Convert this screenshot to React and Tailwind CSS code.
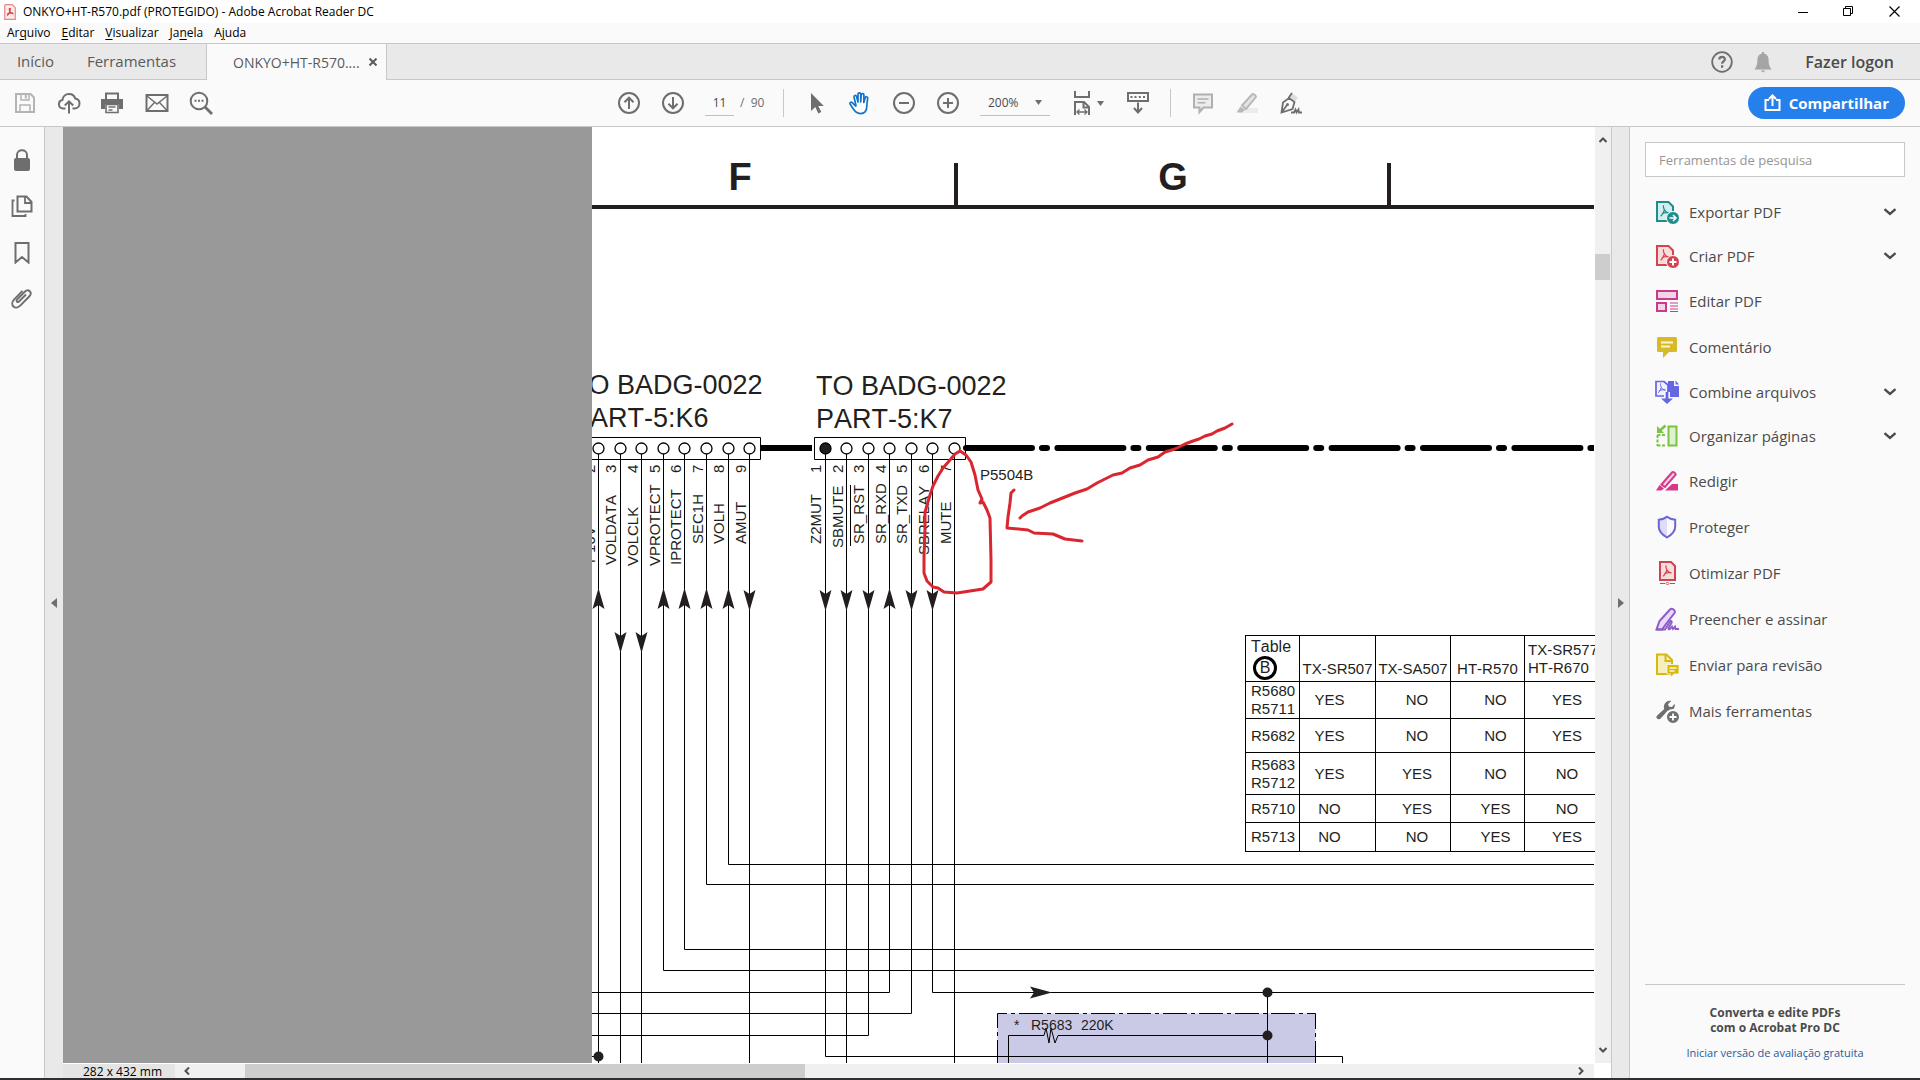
import React from "react";

const LINE = "#6e6e6e";

/* ---------- shared icon pieces ---------- */

function Glyph({ size = 24, children, label }) {
  return (
    <svg
      width={size}
      height={size}
      viewBox="0 0 24 24"
      fill="none"
      stroke="currentColor"
      strokeWidth="2"
      className="shrink-0"
      aria-hidden={label ? undefined : true}
      aria-label={label}
    >
      {children}
    </svg>
  );
}

const ACRO = "M8.5 4.5c-1 0-.6 2.600.4 4.400-.8 2.300-2.300 5.300-3.800 6.300M8.900 8.900c1 1.900 2.300 2.900 4.600 3.100M6.300 13c2.200-1.300 4.600-1.700 7.400-1";

function AppIcon() {
  return (
    <svg width="12" height="16" viewBox="0 0 12 16" fill="none" aria-hidden="true">
      <path d="M1.500.7h6.800l3 3v11.600H.7V1.500z" fill="#fde9e9" stroke="#e58a8a" strokeWidth="1.200" />
      <path d="M5.400 4c-.6 1.200.3 3 1 4 .8 1.200 2 1.800 3.200 1.900M6.300 4c.4 2-1.500 6.600-3.300 7.500M3.200 10c2-1 3.500-1.300 5.600-1.100" stroke="#d9403f" strokeWidth="1.100" />
    </svg>
  );
}

function Chevron() {
  return (
    <svg width="14" height="8" viewBox="0 0 14 8" fill="none" stroke="#4b4b4b" strokeWidth="2.400" aria-hidden="true">
      <path d="M1.500 1.200 7 6l5.500-4.800" />
    </svg>
  );
}

function Caret() {
  return (
    <svg width="7" height="5" viewBox="0 0 7 5" fill={LINE} className="shrink-0" aria-hidden="true">
      <path d="M0 0h7L3.500 5z" />
    </svg>
  );
}

/* ---------- toolbar icons ---------- */

const SaveIcon = () => (
  <Glyph>
    <g stroke="#b4b4b4">
      <path d="M3 3h14.500L21 6.500V21H3z" />
      <path d="M8 3v6h8V3M7 21v-7h10v7" strokeWidth="1.500" />
      <path d="M12.800 4v3.500" />
    </g>
  </Glyph>
);
const CloudIcon = () => (
  <Glyph>
    <path d="M8.500 17.500H6a4.300 4.300 0 0 1-.6-8.500C5.800 5.500 8.500 3 12 3c3 0 5.400 1.800 6.300 4.600 2.600.5 4.200 2.500 4.200 4.900 0 2.800-2.200 5-5 5h-2" />
    <path d="M12 22.500V11M7.800 14.500l4.200-4.200 4.200 4.200" />
  </Glyph>
);
const PrintIcon = () => (
  <Glyph>
    <path d="M6 8V2.500h12V8" />
    <path d="M1 8h22v10h-4v-5H5v5H1z" fill={LINE} stroke="none" />
    <path d="M6 13.500h12v8H6zM8.500 16h7M8.500 19h4" strokeWidth="1.600" />
  </Glyph>
);
const MailIcon = () => (
  <Glyph>
    <path d="M1.500 4h21v16h-21z" />
    <path d="M2 5l10 8 10-8M2 19.500l7.500-8M22 19.500l-7.500-8" strokeWidth="1.500" />
  </Glyph>
);
const FindIcon = () => (
  <Glyph>
    <circle cx="10" cy="10" r="8.300" />
    <path d="M16 16l7 7" strokeWidth="2.800" />
    <path d="M5.500 9.800h2M9 9.800h2M12.500 9.800h2" />
  </Glyph>
);
const UpIcon = () => (
  <Glyph>
    <circle cx="12" cy="12" r="10" />
    <path d="M12 18V7M7.500 11.200 12 6.700l4.500 4.500" />
  </Glyph>
);
const DownIcon = () => (
  <Glyph>
    <circle cx="12" cy="12" r="10" />
    <path d="M12 6v11M7.500 12.800l4.500 4.500 4.500-4.500" />
  </Glyph>
);
const PointerIcon = () => (
  <Glyph>
    <path d="M6 2v18l4.300-4 3 6.500 3-1.400-3-6.200h5.500z" fill={LINE} stroke="none" />
  </Glyph>
);
const HandIcon = () => (
  <Glyph>
    <path
      d="M7.800 13.500 6 6.200c-.4-1.900 2-2.500 2.500-.7L10 11V3.200c0-1.800 2.700-1.800 2.700 0V11l.6-7.200c.2-1.700 2.600-1.600 2.600.1L15.800 11.500l1.400-4.800c.5-1.700 2.800-1.100 2.500.6 0 0-.9 5.200-.9 8.200s-.6 4.200-2 5.700c-1.800 1.800-6.500 1.800-8.500 0C5.800 19.500 4.200 16 2.200 13.300c-1-1.600 1-2.800 2.300-1.400L7.800 15.200z"
      fill="#fff"
      stroke="#1473c8"
      strokeWidth="1.700"
      strokeLinejoin="round"
    />
  </Glyph>
);
const MinusIcon = () => (
  <Glyph>
    <circle cx="12" cy="12" r="10" />
    <path d="M7 12h10" />
  </Glyph>
);
const PlusIcon = () => (
  <Glyph>
    <circle cx="12" cy="12" r="10" />
    <path d="M7 12h10M12 7v10" />
  </Glyph>
);
const FitIcon = () => (
  <svg width="18" height="24" viewBox="0 0 18 24" fill="none" stroke={LINE} strokeWidth="2" aria-hidden="true">
    <path d="M2 0v6h14V0M2 24V11h9l5 5v8M10.500 11v5.500H16" />
    <path d="M4 21h10M6.500 18.500 4 21l2.500 2.500M11.500 18.500 14 21l-2.500 2.500" strokeWidth="1.300" />
  </svg>
);
const ReadIcon = () => (
  <Glyph>
    <path d="M2 2h20v8H2z" />
    <path d="M4.500 6h2M8.500 6h2M12.800 6h2M17 6h2M12 11.500V21M8 17l4 4.500L16 17" />
  </Glyph>
);
const NoteIcon = () => (
  <Glyph>
    <path d="M3 3.500h18v13h-8.500L8.500 21v-4.500H3z" stroke="#b0b0b0" fill="#ececec" />
    <path d="M6.500 8h11M6.500 11.800h8" stroke="#b0b0b0" strokeWidth="1.500" />
  </Glyph>
);
const MarkerIcon = () => (
  <Glyph>
    <path d="M8 17h15v5H4z" fill="#ececec" stroke="none" />
    <path d="M7 14.500 17 3.500c1.200-1.300 4.800 1.500 3.600 3L11 18z" stroke="#b8b8b8" fill="#e4e4e4" />
    <path d="M5.500 15.500l4.500 3.500-3 2.500H1.500z" fill="#b8b8b8" stroke="none" />
  </Glyph>
);
const SignIcon = () => (
  <Glyph>
    <path d="M9.500 7.500 12.500 2l6.500 4.500L15.500 11z" fill="#dedede" stroke="none" />
    <path d="M2.500 21.500 4 11.500l6-4.500 5.500 4-2 7zM3 21l5-7M9.500 7l3.500-5M12 21.500h3l1.500-3 1 3 2-3 .5 3h3" strokeWidth="1.800" />
    <circle cx="8.500" cy="13.500" r="1.500" fill={LINE} stroke="none" />
  </Glyph>
);

/* ---------- tool panel icons ---------- */

const PdfSheet = ({ color, fill }) => (
  <g stroke={color}>
    <path d="M2 2h11.500L18 6.500V21H2z" fill={fill} />
    <path d={ACRO} strokeWidth="1.200" transform="translate(.5 1)" />
  </g>
);

const ExportIcon = () => (
  <Glyph>
    <PdfSheet color="#1f8d90" fill="#d3eeee" />
    <circle cx="18" cy="18" r="6.500" fill="#1f8d90" stroke="#fafafa" strokeWidth="1" />
    <path d="M14.500 18h5M18 15l3 3-3 3" stroke="#fff" strokeWidth="1.600" />
  </Glyph>
);
const CreateIcon = () => (
  <Glyph>
    <PdfSheet color="#d2444f" fill="#fbdcdc" />
    <circle cx="18" cy="18" r="6.500" fill="#d2444f" stroke="#fafafa" strokeWidth="1" />
    <path d="M14.500 18h7M18 14.500v7" stroke="#fff" />
  </Glyph>
);
const EditIcon = () => (
  <Glyph>
    <g stroke="#c93a8c" fill="#f3d3e8">
      <path d="M2 2h20v8H2zM2 14h9v8H2z" />
      <path d="M15 14h8M15 17h8M15 20h8M15 22.500h8" strokeWidth="1.100" />
    </g>
  </Glyph>
);
const CommentIcon = () => (
  <Glyph>
    <path d="M3.500 2h17A1.500 1.500 0 0 1 22 3.500v12a1.500 1.500 0 0 1-1.500 1.500H14l-6 6v-6H3.500A1.500 1.500 0 0 1 2 15.500v-12A1.500 1.500 0 0 1 3.500 2z" fill="#d8b92c" stroke="none" />
    <path d="M6 7.500h12M6 11.500h9" stroke="#fff6cf" strokeWidth="1.800" />
  </Glyph>
);
const CombineIcon = () => (
  <Glyph>
    <path d="M13 1h6v5h5v11H13z" fill="#6466e2" stroke="none" />
    <path d="M20.500.5 24 4.500h-3.500z" fill="#6466e2" stroke="none" />
    <path d="M1 1.500h8l4 3.500v11H1z" fill="#f1f1ff" stroke="#6466e2" strokeWidth="1.700" />
    <path d={ACRO} transform="translate(-1.500 -.5) scale(.88)" stroke="#6466e2" strokeWidth="1.100" />
    <path d="M12 12v10" stroke="#fafafa" strokeWidth="6" />
    <path d="M12 12v8" stroke="#6466e2" strokeWidth="2.800" />
    <path d="M6 18.500h12L12 24z" fill="#6466e2" stroke="none" />
  </Glyph>
);
const OrganizeIcon = () => (
  <Glyph>
    <g stroke="#7cc243">
      <path d="M13.500 2.500h8v19h-8z" fill="#dff2cf" />
      <path d="M2.500 11h8.500M2.500 21.500h8.500M2.500 11v11" strokeDasharray="3 1.500" />
      <path d="M10.500 1.500 5 6.500" strokeWidth="2.500" />
      <path d="M2 2v7h7z" fill="#7cc243" stroke="none" />
    </g>
  </Glyph>
);
const RedactIcon = () => (
  <Glyph>
    <path d="M10 21.500 17 15h6v6.500z" fill="#d8388c" stroke="none" />
    <path d="M6.500 15.500 17 3.500c1.200-1.400 4.500 1 3.300 2.700L10 18z" stroke="#d8388c" fill="#f7cfe3" />
    <path d="M4.500 16l4.500 3.500-2.500 2H1z" fill="#d8388c" stroke="none" />
  </Glyph>
);
const ShieldIcon = () => (
  <Glyph>
    <path d="M12 2v20c-5-3-8-6-8-11V5c4 0 6-1.300 8-3z" fill="#dedcf8" stroke="none" />
    <path d="M12 1.800c2 1.700 4.500 2.700 8.200 2.900v7c0 4.500-3.200 7.800-8.200 10.800-5-3-8.200-6.300-8.200-10.800v-7c3.700-.2 6.200-1.200 8.200-2.900z" stroke="#6a66d6" />
  </Glyph>
);
const OptimizeIcon = () => (
  <Glyph>
    <g stroke="#cc4552">
      <path d="M5 1h11l4 4v14H5z" fill="#fbdcdc" />
      <path d={ACRO} transform="translate(3 0)" strokeWidth="1.200" />
      <path d="M5 22.500h5M15 22.500h5" strokeWidth="1.200" />
      <path d="M11 22.500l1.500-1.500 1.500 1.500-1.500 1.500z" strokeWidth="1" />
    </g>
  </Glyph>
);
const FillIcon = () => (
  <Glyph>
    <path
      d="M1.500 22.500 4.500 14 15 2.500c2-2 6 .8 4.500 3.500L11 17l-4 5.500z"
      stroke="#8e5bc9"
      fill="#e9daf8"
    />
    <path
      d="M1.500 22.500H10l5-8c1-1.500 2.500 0 1.500 1.500L13.500 21c-.5 1.500 1 2 2 .5l1.500-2 1 2.500 2-2.500.5 2.500H24"
      stroke="#8e5bc9"
      strokeWidth="1.800"
    />
  </Glyph>
);
const SendIcon = () => (
  <Glyph>
    <path d="M2 1.500h9.500L17 7v14H2z" fill="#f6efba" stroke="#d8b910" />
    <path d="M10.500 1.500V8H17" stroke="#d8b910" />
    <path d="M12 11.500h12v9.500h-5l-3.500 3.500V21H12z" fill="#d8b910" stroke="#fafafa" strokeWidth=".8" />
    <path d="M14.500 15h7M14.500 18h5" stroke="#fff6cf" strokeWidth="1.300" />
  </Glyph>
);
const MoreIcon = () => (
  <Glyph>
    <path d="M2 20.500c-1-1-.7-2.300.2-3.100l7-6.300c-.8-2.800-.2-5.400 2-7.100 1.500-1.200 3.300-1.500 5-1.100L13 6.200l1.200 2.500 2.800.3 2.600-3.200c.6 2-.1 4.300-1.500 5.700-1.500 1.300-3.700 1.800-5.500 1.300l-7 7.700c-.9 1-2.500 1-3.600 0z" fill={LINE} stroke="none" transform="translate(0 -1)" />
    <circle cx="18" cy="18" r="7" fill={LINE} stroke="#fafafa" />
    <path d="M14.500 18h7M18 14.500v7" stroke="#fff" strokeWidth="1.800" />
  </Glyph>
);

const TOOLS = [
  { name: "Exportar PDF", Icon: ExportIcon, open: true },
  { name: "Criar PDF", Icon: CreateIcon, open: true },
  { name: "Editar PDF", Icon: EditIcon },
  { name: "Comentário", Icon: CommentIcon },
  { name: "Combine arquivos", Icon: CombineIcon, open: true },
  { name: "Organizar páginas", Icon: OrganizeIcon, open: true },
  { name: "Redigir", Icon: RedactIcon },
  { name: "Proteger", Icon: ShieldIcon },
  { name: "Otimizar PDF", Icon: OptimizeIcon },
  { name: "Preencher e assinar", Icon: FillIcon },
  { name: "Enviar para revisão", Icon: SendIcon },
  { name: "Mais ferramentas", Icon: MoreIcon },
];

/* ---------- window chrome ---------- */

function TitleBar() {
  return (
    <header className="flex h-[23px] shrink-0 items-center bg-white pl-1 text-[12px] text-black">
      <AppIcon />
      <h1 className="ml-[7px] text-[12px] font-normal">ONKYO+HT-R570.pdf (PROTEGIDO) - Adobe Acrobat Reader DC</h1>
      <div className="ml-auto flex pr-[2px]">
        <button aria-label="Minimizar" className="grid h-[23px] w-[46px] place-items-center">
          <svg width="10" height="10" stroke="#000"><path d="M0 5.500h10" /></svg>
        </button>
        <button aria-label="Restaurar" className="grid h-[23px] w-[45px] place-items-center">
          <svg width="11" height="11" fill="none" stroke="#000"><path d="M.5 2.500h7v7h-7zM2.500 2.500v-2h7v7h-2" /></svg>
        </button>
        <button aria-label="Fechar" className="grid h-[23px] w-[47px] place-items-center">
          <svg width="11" height="11" stroke="#000" strokeWidth="1.200"><path d="M.5.5l10 10M10.500.5l-10 10" /></svg>
        </button>
      </div>
    </header>
  );
}

const MENUS = [
  ["Ar", "q", "uivo"],
  ["", "E", "ditar"],
  ["", "V", "isualizar"],
  ["Ja", "n", "ela"],
  ["A", "j", "uda"],
];

function MenuBar() {
  return (
    <nav className="flex h-5 shrink-0 items-center gap-[11px] bg-[#fafafa] pl-[7px] text-[12px] text-black">
      {MENUS.map(([a, k, b]) => (
        <button key={a + k + b}>
          {a}
          <span className="underline underline-offset-2">{k}</span>
          {b}
        </button>
      ))}
    </nav>
  );
}

function TabBar() {
  return (
    <div className="flex h-[37px] shrink-0 items-stretch border-y border-[#c8c8c8] bg-[#e9e9e9] text-[#5a5a5a]">
      <button className="w-[71px] text-[15px]">Início</button>
      <button className="w-[135px] pr-[15px] pl-[1px] text-[15px]">Ferramentas</button>
      <div className="-mb-px flex w-[181px] items-center border-x border-[#c8c8c8] bg-[#fafafa] pl-[26px]">
        <button className="w-[125px] text-left text-[14px] whitespace-nowrap">ONKYO+HT-R570....</button>
        <button aria-label="Fechar guia" className="ml-[11px]">
          <svg width="8" height="8" stroke="#5a5a5a" strokeWidth="2"><path d="M.5.5l7 7M7.500.5l-7 7" /></svg>
        </button>
      </div>
      <div className="ml-auto flex items-center pr-[26px]">
        <button aria-label="Ajuda" className="text-[#6e6e6e]">
          <svg width="22" height="22" viewBox="0 0 22 22" fill="none" stroke="currentColor" strokeWidth="1.800">
            <circle cx="11" cy="11" r="9.800" />
            <path d="M8.300 8.500c0-3.500 5.600-3.300 5.600-.3 0 2.200-2.800 2.300-2.800 4.500M11.100 14.300v2.400" strokeWidth="2.200" />
          </svg>
        </button>
        <button aria-label="Notificações" className="ml-[21px]">
          <svg width="18" height="22" viewBox="0 0 18 22" fill="#a5a5a5">
            <path d="M8 1h2v1.500c3 .5 4.600 3 4.600 6.500 0 4.500.8 6.500 3 9.500H.4c2.200-3 3-5 3-9.500C3.400 5.500 5 3 8 2.500zM6.500 19.500h5L9 21.500z" />
          </svg>
        </button>
        <button className="ml-[33px] text-[16px] font-semibold text-[#4b4b4b]">Fazer logon</button>
      </div>
    </div>
  );
}

function ToolButton({ label, className = "w-[44px]", children }) {
  return (
    <button aria-label={label} className={`flex h-9 shrink-0 items-center justify-center ${className}`}>
      {children}
    </button>
  );
}

function Toolbar() {
  return (
    <div className="flex h-[47px] shrink-0 items-center border-b border-[#c8c8c8] bg-[#fafafa] text-[#6e6e6e]">
      <div className="flex flex-1 items-center">
        <ToolButton label="Salvar" className="ml-[3px] w-[44px]"><SaveIcon /></ToolButton>
        <ToolButton label="Enviar para a nuvem"><CloudIcon /></ToolButton>
        <ToolButton label="Imprimir" className="w-[42px]"><PrintIcon /></ToolButton>
        <ToolButton label="Enviar por e-mail" className="w-[48px]"><MailIcon /></ToolButton>
        <ToolButton label="Localizar" className="w-[40px]"><FindIcon /></ToolButton>
      </div>
      <div className="flex shrink-0 items-center text-[12px]">
        <ToolButton label="Página anterior"><UpIcon /></ToolButton>
        <ToolButton label="Próxima página"><DownIcon /></ToolButton>
        <input
          aria-label="Número da página"
          defaultValue="11"
          className="ml-[10px] h-[26px] w-[29px] border-b border-[#c0c0c0] text-center text-[#4b4b4b]"
        />
        <span className="ml-[6px] w-[43px]">/&nbsp; 90</span>
        <span className="h-7 w-px bg-[#c8c8c8]" />
        <ToolButton label="Selecionar" className="ml-[11px] w-[43px]"><PointerIcon /></ToolButton>
        <ToolButton label="Mão"><HandIcon /></ToolButton>
        <ToolButton label="Diminuir zoom"><MinusIcon /></ToolButton>
        <ToolButton label="Aumentar zoom"><PlusIcon /></ToolButton>
        <div className="ml-[10px] flex h-[26px] w-[70px] items-center border-b border-[#c0c0c0]">
          <select aria-label="Zoom" defaultValue="200%" className="-mr-[10px] h-full w-[65px] appearance-none pl-2 text-[#4b4b4b]">
            <option>100%</option>
            <option>200%</option>
          </select>
          <Caret />
        </div>
        <ToolButton label="Ajustar à largura" className="ml-[21px] w-[35px] gap-[6px]">
          <FitIcon />
          <Caret />
        </ToolButton>
        <ToolButton label="Modo de leitura" className="ml-[10px] w-[44px]"><ReadIcon /></ToolButton>
        <span className="ml-[10px] h-7 w-px bg-[#c8c8c8]" />
        <ToolButton label="Comentar" className="ml-[10px] w-[44px]"><NoteIcon /></ToolButton>
        <ToolButton label="Realçar"><MarkerIcon /></ToolButton>
        <ToolButton label="Assinar"><SignIcon /></ToolButton>
      </div>
      <div className="flex flex-1 justify-end">
        <button className="mr-[15px] flex h-8 items-center rounded-full bg-[#2680eb] px-4 text-[15px] font-bold text-white">
          <svg width="17" height="18" viewBox="0 0 17 18" fill="none" stroke="#fff" strokeWidth="2" aria-hidden="true">
            <path d="M5 6H1.500v10h14V6H12M8.500 12V2M5 5l3.500-3.500L12 5" />
          </svg>
          <span className="ml-2">Compartilhar</span>
        </button>
      </div>
    </div>
  );
}

function NavRail() {
  return (
    <nav className="flex w-[45px] shrink-0 flex-col items-start border-r border-[#c8c8c8] bg-[#fafafa] pt-[10px] text-[#6e6e6e]">
      <ToolButton label="Segurança" className="my-[5px] w-[44px]">
        <Glyph>
          <rect x="4" y="10" width="16" height="13" rx="2" fill={LINE} stroke="none" />
          <path d="M7 11V7c0-6.300 10-6.300 10 0v4" />
        </Glyph>
      </ToolButton>
      <ToolButton label="Miniaturas" className="my-[5px] w-[44px]">
        <Glyph>
          <path d="M7.500 2.500h9L21.500 8v9.500h-14z" />
          <path d="M15 2.500v6.500h6.500M4.500 6.500h-2V22h13v-2" strokeWidth="1.800" />
        </Glyph>
      </ToolButton>
      <ToolButton label="Marcadores" className="my-[5px] w-[44px]">
        <Glyph><path d="M5.500 3h13v19.500L12 17l-6.500 5.500z" /></Glyph>
      </ToolButton>
      <ToolButton label="Anexos" className="my-[5px] w-[44px]">
        <Glyph>
          <path d="M16.500 8 9.500 15c-1.500 1.500-3.300-.3-2-1.800L15 5.500c4-4 8.500.5 4.700 4.500l-9 9.200c-5 5-11-.8-6.200-6L13 4.300" transform="translate(-.5 .5)" strokeWidth="1.900" />
        </Glyph>
      </ToolButton>
    </nav>
  );
}

/* ---------- schematic page ---------- */

const INK = "#231f20";
const LEFT_PINS = [598, 620, 641, 663, 684, 706, 728, 749];
const RIGHT_PINS = [825, 846, 868, 889, 911, 932, 954];

const WIRES = [
  "M598.500 454V1064",
  "M620.500 454V1064",
  "M641.500 454V1064",
  "M663.500 454V970.500H1594",
  "M684.500 454V949.500H1594",
  "M706.500 454V884.500H1594",
  "M728.500 454V864.500H1594",
  "M749.500 454V1064",
  "M825.500 454V1056.500H1342.500V1064",
  "M846.500 454V1064",
  "M868.500 454V1035.500H592",
  "M889.500 454V992.500H592",
  "M911.500 454V1013.500H592",
  "M932.500 454V992.500H1594",
  "M954.500 454V1064",
  "M1267.500 992V1064",
  "M1008.500 1064V1035.500H1044L1046 1028L1049 1043L1051 1028L1055 1043L1058 1035.500H1267",
  "M592 1056.500H598",
];

const UP_ARROWS = [598, 663, 684, 706, 728, 889];
const DOWN_ARROWS = [
  [749, 590], [825, 590], [846, 590], [868, 590], [911, 590], [932, 590],
  [620, 632], [641, 632],
];

const PIN_LABELS = [
  [595, "2", "P16V", 563],
  [616, "3", "VOLDATA", 565],
  [638, "4", "VOLCLK", 566],
  [660, "5", "VPROTECT", 566],
  [681, "6", "IPROTECT", 565],
  [703, "7", "SEC1H", 544],
  [724, "8", "VOLH", 544],
  [746, "9", "AMUT", 544],
  [821, "1", "Z2MUT", 544],
  [843, "2", "SBMUTE", 548],
  [864, "3", "SR_RST", 544],
  [886, "4", "SR_RXD", 544],
  [907, "5", "SR_TXD", 544],
  [929, "6", "SBRELAY", 555],
  [951, "7", "MUTE", 544],
];

function Schematic() {
  return (
    <svg
      width="1002"
      height="937"
      viewBox="592 127 1002 937"
      className="block font-['Liberation_Sans',Arial,sans-serif] [font-kerning:none]"
      fill={INK}
      role="img"
      aria-label="Esquema elétrico"
    >
      <g fontSize="38" fontWeight="700" textAnchor="middle">
        <text x="740" y="190">F</text>
        <text x="1173" y="190">G</text>
      </g>
      <path d="M592 207H1594M956 163V207M1389 163V207" stroke={INK} strokeWidth="4" />

      <g fontSize="27">
        <text x="572" y="394">TO BADG-0022</text>
        <text x="572" y="427">PART-5:K6</text>
        <text x="816" y="395">TO BADG-0022</text>
        <text x="816" y="428">PART-5:K7</text>
      </g>

      <path d="M760 448H812" stroke="#000" strokeWidth="6" />
      <path d="M966 448H1594" stroke="#000" strokeWidth="6" strokeLinecap="round" strokeDasharray="66 10 5 10.400" />

      <path d="M997.500 1064V1013.500H1315.500V1064" fill="#cacae6" stroke="#000" strokeDasharray="24 4 4 4" />
      <path d={WIRES.join("")} fill="none" stroke="#000" />
      <path d="M590 437.500H760.500V459.500H590M814.500 437.500H965.500V459.500H814.500z" fill="none" stroke="#000" />

      <g fill="#fff" stroke="#000" strokeWidth="1.300">
        {LEFT_PINS.map((x) => <circle key={x} cx={x + 0.5} cy="448.500" r="5.500" />)}
        {RIGHT_PINS.map((x, i) => (
          <circle key={x} cx={x + 0.5} cy="448.500" r="5.500" fill={i === 0 ? INK : "#fff"} />
        ))}
      </g>

      {UP_ARROWS.map((x) => <path key={x} d={`M${x + 0.5} 588l6 21-6-4-6 4z`} />)}
      {DOWN_ARROWS.map(([x, y]) => <path key={x} d={`M${x + 0.5} ${y + 21}l6-21-6 4-6-4z`} />)}
      <path d="M1052 992.500l-22-6 4 6-4 6z" />
      <circle cx="598.500" cy="1056.500" r="5" />
      <circle cx="1267.500" cy="992.500" r="5" />
      <circle cx="1267.500" cy="1035.500" r="5" />

      <g fontSize="15">
        {PIN_LABELS.map(([x, pin, label, y]) => (
          <React.Fragment key={x}>
            <text transform={`translate(${x} 473) rotate(-90)`}>{pin}</text>
            <text transform={`translate(${x} ${y}) rotate(-90)`}>{label}</text>
          </React.Fragment>
        ))}
        <text x="980" y="480">P5504B</text>
      </g>
      <path d="M850.500 485V546" stroke="#000" />
      <g fontSize="14">
        <text x="1014" y="1030">*</text>
        <text x="1031" y="1030">R5683</text>
        <text x="1081" y="1030">220K</text>
      </g>

      <g fill="none" stroke="#d9262f" strokeWidth="3" strokeLinecap="round" strokeLinejoin="round">
        <path d="M960 451 955 454 950 460 943 468 938 476 933 486 930 495 925 512 925 530 924 557 924 573 927 581 933 587 938 588 944 592 957 593 970 591 983 589 991 582 991 560 990 518 987 510 983 502 980 503 982 499 978 490 975 475 971 462 966 455z" />
        <path d="M1232 424 1225 428 1217 431 1212 434 1205 436 1199 439 1193 441 1185 444 1175 449 1165 452 1158 457 1148 460 1140 465 1130 468 1122 473 1113 475 1097 483 1087 489 1075 493 1060 499 1050 503 1040 508 1028 512 1022 516 1020 518" />
        <path d="M1014 490 1011 493 1010 503 1008 517 1007 528 1028 530 1034 533 1053 534 1065 539 1082 541" />
      </g>
    </svg>
  );
}

const MODEL_ROWS = [
  { parts: ["R5680", "R5711"], h: "h-[37px]", v: ["YES", "NO", "NO", "YES"] },
  { parts: ["R5682"], h: "h-[34px]", v: ["YES", "NO", "NO", "YES"] },
  { parts: ["R5683", "R5712"], h: "h-[42px]", v: ["YES", "YES", "NO", "NO"] },
  { parts: ["R5710"], h: "h-[28px]", v: ["NO", "YES", "YES", "NO"] },
  { parts: ["R5713"], h: "h-[29px]", v: ["NO", "NO", "YES", "YES"] },
];
const CELL_PAD = ["pr-4", "pl-2", "pl-4", "pr-3"];

function ModelTable() {
  return (
    <table className="absolute top-[508px] left-[653px] w-[376px] table-fixed border-collapse border border-black font-['Liberation_Sans',Arial,sans-serif] text-[15px] leading-[18px] text-[#231f20] [font-kerning:none]">
      <colgroup>
        <col className="w-[54px]" />
        <col className="w-[76px]" />
        <col className="w-[75px]" />
        <col className="w-[74px]" />
        <col className="w-[97px]" />
      </colgroup>
      <thead>
        <tr className="h-[46px] align-bottom whitespace-nowrap">
          <th className="border border-black p-0 pl-[5px] text-left align-top text-[16px] font-normal">
            <span className="block pt-[2px] leading-[18px]">Table</span>
            <span className="ml-[2px] grid h-6 w-6 place-items-center rounded-full border-[3px] border-black leading-none">B</span>
          </th>
          <th className="border border-black p-0 pb-[3px] font-normal">TX-SR507</th>
          <th className="border border-black p-0 pb-[3px] font-normal">TX-SA507</th>
          <th className="border border-black p-0 pb-[3px] font-normal">HT-R570</th>
          <th className="border border-black p-0 pb-1 pl-[3px] text-left font-normal">
            TX-SR577
            <br />
            HT-R670
          </th>
        </tr>
      </thead>
      <tbody>
        {MODEL_ROWS.map((row) => (
          <tr key={row.parts[0]} className={row.h}>
            <th className="border border-black p-0 pl-[5px] text-left font-normal">
              {row.parts.map((p) => <div key={p}>{p}</div>)}
            </th>
            {row.v.map((v, i) => (
              <td key={i} className={`border border-black py-0 text-center ${CELL_PAD[i]}`}>{v}</td>
            ))}
          </tr>
        ))}
      </tbody>
    </table>
  );
}

/* ---------- document area ---------- */

function ScrollArrow({ d, label, className }) {
  return (
    <button aria-label={label} className={`grid shrink-0 place-items-center ${className}`}>
      <svg width="8" height="8" fill="none" stroke="#505050" strokeWidth="2"><path d={d} /></svg>
    </button>
  );
}

function DocumentArea() {
  return (
    <main className="flex min-w-0 flex-1 flex-col">
      <div className="flex min-h-0 flex-1">
        <div className="flex min-w-0 flex-1 bg-[#999999]">
          <div className="w-[529px] shrink-0" />
          <div className="relative min-w-0 flex-1 overflow-hidden bg-white">
            <Schematic />
            <ModelTable />
          </div>
        </div>
        <div className="flex w-[16px] shrink-0 flex-col bg-[#f0f0f0]">
          <ScrollArrow label="Rolar para cima" className="h-[26px] w-[15px]" d="M.5 6 4 2.500 7.500 6" />
          <div className="mt-[101px] h-[26px] w-[15px] bg-[#cdcdcd]" />
          <ScrollArrow label="Rolar para baixo" className="mt-auto h-[26px] w-[15px]" d="M.5 2 4 5.500 7.500 2" />
        </div>
      </div>
      <div className="flex h-[15px] shrink-0 border-t border-white bg-[#f0f0f0]">
        <span className="w-[112px] bg-[#e4e4e4] pl-5 text-[12px] leading-[15px] whitespace-nowrap text-black">282 x 432 mm</span>
        <ScrollArrow label="Rolar para a esquerda" className="h-[14px] w-[24px]" d="M6 .5 2.500 4 6 7.500" />
        <div className="ml-[46px] w-[560px] bg-[#cdcdcd]" />
        <ScrollArrow label="Rolar para a direita" className="ml-auto h-[14px] w-[27px]" d="M2 .5 5.500 4 2 7.500" />
        <div className="w-[17px] bg-white" />
      </div>
    </main>
  );
}

function Splitter({ label, d, className }) {
  return (
    <button aria-label={label} className={`grid shrink-0 place-items-center bg-[#e9e9e9] ${className}`}>
      <svg width="6" height="10" fill={LINE}><path d={d} /></svg>
    </button>
  );
}

function ToolsPanel() {
  return (
    <aside className="flex w-[290px] shrink-0 flex-col bg-[#fafafa] px-[15px] text-[#4b4b4b]">
      <input
        type="search"
        aria-label="Ferramentas de pesquisa"
        placeholder="Ferramentas de pesquisa"
        className="mt-[15px] h-[35px] shrink-0 border border-[#c8c8c8] bg-white px-[13px] text-[13px] placeholder:text-[#959595]"
      />
      <ul className="mt-[13px]">
        {TOOLS.map(({ name, Icon, open }) => (
          <li key={name}>
            <button className={`flex w-full items-center pr-2 pl-[10px] text-[15px] ${open ? "h-[44px]" : "h-[46px]"}`}>
              <Icon />
              <span className="ml-[10px]">{name}</span>
              {open && <span className="ml-auto"><Chevron /></span>}
            </button>
          </li>
        ))}
      </ul>
      <div className="mt-auto flex h-[94px] flex-col items-center border-t border-[#c8c8c8] pt-[20px] text-center">
        <p className="text-[12px] leading-[15px] font-bold">
          Converta e edite PDFs
          <br />
          com o Acrobat Pro DC
        </p>
        <a href="#avaliacao" className="mt-[10px] text-[11px] leading-4 text-[#1e5a9e]">Iniciar versão de avaliação gratuita</a>
      </div>
    </aside>
  );
}

export default function App() {
  return (
    <div className="flex h-screen flex-col overflow-hidden border-b-2 border-[#2f2f33] bg-[#fafafa] font-['Open_Sans','Noto_Sans',sans-serif]">
      <TitleBar />
      <MenuBar />
      <TabBar />
      <Toolbar />
      <div className="flex min-h-0 flex-1">
        <NavRail />
        <Splitter label="Mostrar painel de navegação" d="M6 0v10L0 5z" className="w-[18px]" />
        <DocumentArea />
        <Splitter label="Ocultar painel de ferramentas" d="M0 0v10l6-5z" className="w-[19px] border-x border-[#c8c8c8]" />
        <ToolsPanel />
      </div>
    </div>
  );
}
